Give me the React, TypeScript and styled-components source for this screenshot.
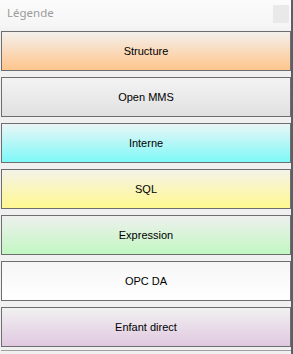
import * as React from "react";
import styled, { createGlobalStyle } from "styled-components";

const GlobalStyle = createGlobalStyle`
    html, body {
        margin: 0;
        padding: 0;
        background: #f0f0f0;
    }
`;

const Window = styled.div`
    width: 293px;
    height: 354px;
    box-sizing: border-box;
    display: flex;
    flex-direction: column;
    background: #f0f0f0;
    border-right: 2px solid #5a5f66;
    overflow: hidden;
`;

const TitleBar = styled.div`
    height: 31px;
    flex: none;
    display: flex;
    align-items: flex-start;
    justify-content: space-between;
    background: linear-gradient(to bottom, #fbfbfb 0%, #f6f6f6 80%, #f0f0f0 100%);
    padding: 0 2px 0 7px;
    box-sizing: border-box;
`;

const Title = styled.span`
    font-family: "Noto Sans", "Open Sans", sans-serif;
    font-size: 11.5px;
    line-height: 14px;
    margin-top: 6px;
    color: #9b9b9b;
`;

const CloseBox = styled.div`
    width: 16px;
    height: 18px;
    margin-top: 5px;
    background: #e9e9e9;
`;

const List = styled.div`
    display: flex;
    flex-direction: column;
    gap: 6px;
    padding-left: 1px;
`;

const LegendButton = styled.div<{ $top: string; $bottom: string }>`
    width: 290px;
    height: 40px;
    box-sizing: border-box;
    border: 1px solid #6e6e6e;
    background: linear-gradient(to bottom, ${(p) => p.$top} 0%, ${(p) => p.$bottom} 100%);
    display: flex;
    align-items: center;
    justify-content: center;
    font-family: "Liberation Sans", Arial, sans-serif;
    font-size: 11px;
    color: #000;
`;

const BottomEdge = styled.div`
    margin-top: 3px;
    margin-left: 1px;
    height: 1px;
    width: 290px;
    background: #a0a0a0;
`;

const items = [
    { label: "Structure", top: "#f4f0ec", bottom: "#ffc58c" },
    { label: "Open MMS", top: "#f3f3f3", bottom: "#e1e1e1" },
    { label: "Interne", top: "#eaf6f6", bottom: "#7ef8f8" },
    { label: "SQL", top: "#f4f3e8", bottom: "#fff890" },
    { label: "Expression", top: "#eef0ee", bottom: "#c2f7c2" },
    { label: "OPC DA", top: "#f6f6f6", bottom: "#ffffff" },
    { label: "Enfant direct", top: "#f1f1f1", bottom: "#e0c8e0" },
];

export default function App() {
    return (
        <>
            <GlobalStyle />
            <Window>
                <TitleBar>
                    <Title>Légende</Title>
                    <CloseBox />
                </TitleBar>
                <List>
                    {items.map((item) => (
                        <LegendButton key={item.label} $top={item.top} $bottom={item.bottom}>
                            {item.label}
                        </LegendButton>
                    ))}
                </List>
                <BottomEdge />
            </Window>
        </>
    );
}
